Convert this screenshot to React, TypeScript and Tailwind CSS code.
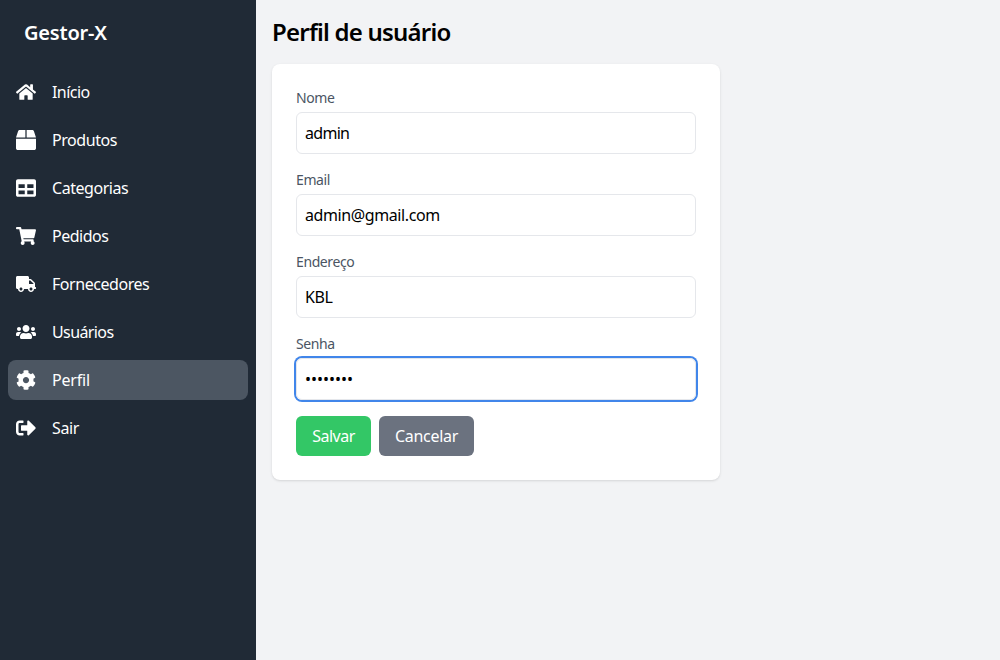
import { useEffect, useRef } from 'react';
import { FaHome, FaBox, FaTable, FaShoppingCart, FaTruck, FaUsers, FaCog, FaSignOutAlt } from 'react-icons/fa';

const items = [
  { label: 'Início', icon: FaHome, text: 'tracking-[-0.55px]' },
  { label: 'Produtos', icon: FaBox, text: 'tracking-[-0.45px]' },
  { label: 'Categorias', icon: FaTable, text: 'tracking-[-0.45px]' },
  { label: 'Pedidos', icon: FaShoppingCart, text: 'tracking-[-0.5px]' },
  { label: 'Fornecedores', icon: FaTruck, text: 'tracking-[-0.45px]' },
  { label: 'Usuários', icon: FaUsers, text: 'tracking-[-0.6px]' },
  { label: 'Perfil', icon: FaCog, text: 'tracking-[-0.2px]' },
  { label: 'Sair', icon: FaSignOutAlt, text: 'tracking-[-0.4px]' },
];

const fields = [
  { label: 'Nome', value: 'admin', type: 'text', text: 'tracking-[-0.7px]' },
  { label: 'Email', value: 'admin@gmail.com', type: 'email', text: 'tracking-[-0.4px]' },
  { label: 'Endereço', value: 'KBL', type: 'text', text: 'tracking-[-0.4px]' },
  { label: 'Senha', value: 'password', type: 'password', text: 'tracking-normal' },
];

export default function App() {
  const password = useRef<HTMLInputElement>(null);
  useEffect(() => {
    password.current?.focus();
  }, []);

  return (
    <div className="flex h-screen bg-[#f2f3f5] font-['Noto_Sans',sans-serif] text-base text-black">
      <aside className="flex w-64 shrink-0 flex-col bg-[#202a36] text-white">
        <div className="flex h-16 items-center px-6 pt-0.5 text-xl font-semibold tracking-[-0.2px]">Gestor-X</div>
        <ul className="flex flex-col gap-2 p-2">
          {items.map(({ label, icon: Icon, text }) => (
            <li
              key={label}
              className={`flex h-10 items-center gap-4 rounded-lg px-2 ${label === 'Perfil' ? 'bg-[#4c5662]' : ''}`}
            >
              <Icon size={20} />
              <span className={text}>{label}</span>
            </li>
          ))}
        </ul>
      </aside>
      <main className="flex-1 p-4">
        <h1 className="mb-4 text-2xl font-semibold tracking-[-0.78px]">Perfil de usuário</h1>
        <form className="w-[448px] rounded-lg bg-white p-6 shadow">
          {fields.map((f) => (
            <div key={f.label} className="mb-4">
              <label className="block text-sm tracking-[-0.4px] text-[#4b5563]">{f.label}</label>
              <input
                ref={f.type === 'password' ? password : undefined}
                type={f.type}
                defaultValue={f.value}
                className={`mt-1 block h-[42px] w-full rounded-md border border-[#e5e7eb] p-2 caret-transparent outline-none focus:ring-2 focus:ring-[#4186ea] ${f.text}`}
              />
            </div>
          ))}
          <div className="flex gap-2">
            <button type="button" className="h-10 w-[75px] rounded-md bg-[#33c766] tracking-[-0.5px] text-white">Salvar</button>
            <button type="button" className="h-10 w-[95px] rounded-md bg-[#6b727f] tracking-[-0.3px] text-white">Cancelar</button>
          </div>
        </form>
      </main>
    </div>
  );
}
